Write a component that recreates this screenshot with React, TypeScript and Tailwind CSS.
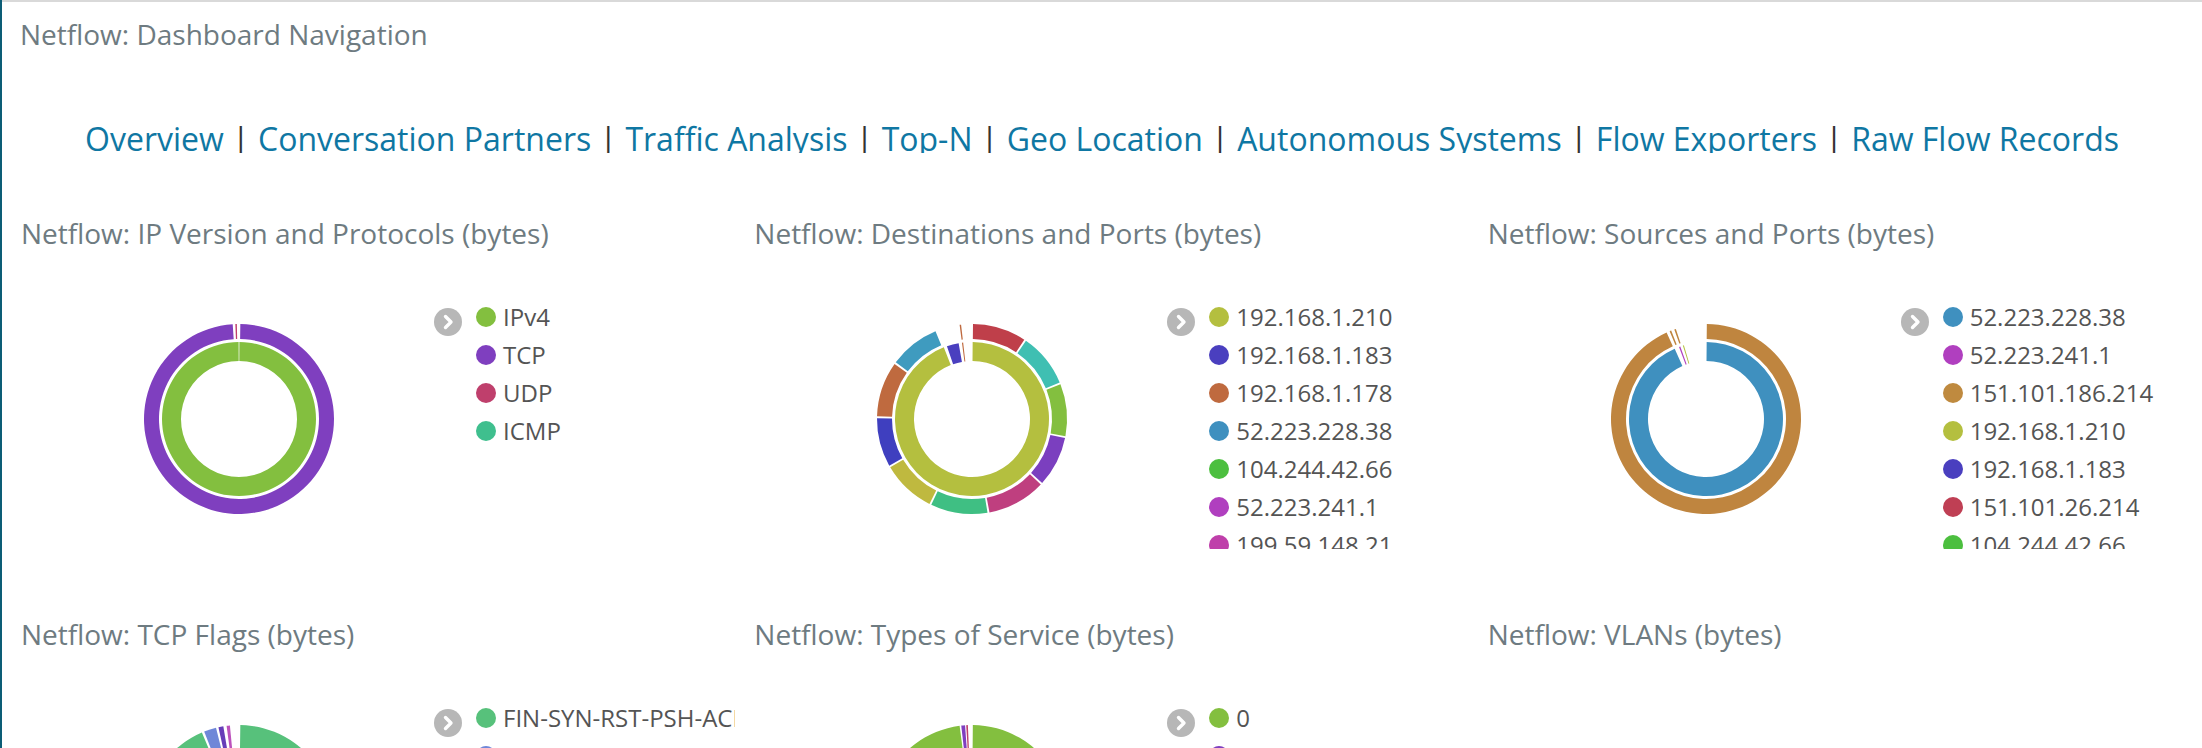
import React from 'react';

type Slice = [number, number, string];
type Ring = { r0: number; r1: number; slices: Slice[] };
type LegendItem = { label: string; dot: string };
type Panel = { title: string; rings?: Ring[]; legend?: LegendItem[] };

// slices that touch each other, with a small white seam between them
function seq(bounds: number[], colors: string[], gap = 0.6): Slice[] {
  return colors.map((c, i) => [bounds[i] + gap, bounds[i + 1] - gap, c] as Slice);
}

function arcPath(cx: number, cy: number, r0: number, r1: number, a0: number, a1: number) {
  const rad = (a: number) => ((a - 90) * Math.PI) / 180;
  const pt = (r: number, a: number) => [cx + r * Math.cos(rad(a)), cy + r * Math.sin(rad(a))];
  const large = a1 - a0 > 180 ? 1 : 0;
  const [x0, y0] = pt(r1, a0);
  const [x1, y1] = pt(r1, a1);
  if (r0 === 0) {
    return `M${cx} ${cy} L${x0} ${y0} A${r1} ${r1} 0 ${large} 1 ${x1} ${y1} Z`;
  }
  const [x2, y2] = pt(r0, a1);
  const [x3, y3] = pt(r0, a0);
  return `M${x0} ${y0} A${r1} ${r1} 0 ${large} 1 ${x1} ${y1} L${x2} ${y2} A${r0} ${r0} 0 ${large} 0 ${x3} ${y3} Z`;
}

const links = [
  'Overview',
  'Conversation Partners',
  'Traffic Analysis',
  'Top-N',
  'Geo Location',
  'Autonomous Systems',
  'Flow Exporters',
  'Raw Flow Records',
];

const panels: Panel[] = [
  {
    title: 'Netflow: IP Version and Protocols (bytes)',
    rings: [
      { r0: 58, r1: 77, slices: [[0.3, 359.7, '#83bf3f']] },
      { r0: 80, r1: 95, slices: [[0.8, 356.2, '#7f3fbf'], [357.8, 358.7, '#bf3f6c']] },
    ],
    legend: [
      { label: 'IPv4', dot: 'bg-[#83bf3f]' },
      { label: 'TCP', dot: 'bg-[#7f3fbf]' },
      { label: 'UDP', dot: 'bg-[#bf3f6c]' },
      { label: 'ICMP', dot: 'bg-[#3fbf8e]' },
    ],
  },
  {
    title: 'Netflow: Destinations and Ports (bytes)',
    rings: [
      {
        r0: 58,
        r1: 77,
        slices: [
          [0.5, 338.5, '#b4bf3f'],
          [341, 350, '#4a3fbf'],
          [352.5, 353.4, '#bf6a3f'],
        ],
      },
      {
        r0: 80,
        r1: 95,
        slices: [
          ...seq(
            [0, 34, 68, 101, 133, 170, 206, 240, 271, 306, 338],
            ['#bf3f4a', '#3fbfb2', '#83bf3f', '#7b3fbf', '#bf3f7f', '#3fbf83', '#bfb93f', '#3f3fbf', '#bf6a3f', '#3f9bbf'],
          ),
          [352.5, 353.4, '#bf6a3f'],
        ],
      },
    ],
    legend: [
      { label: '192.168.1.210', dot: 'bg-[#b4bf3f]' },
      { label: '192.168.1.183', dot: 'bg-[#4a3fbf]' },
      { label: '192.168.1.178', dot: 'bg-[#bf6a3f]' },
      { label: '52.223.228.38', dot: 'bg-[#3f90bf]' },
      { label: '104.244.42.66', dot: 'bg-[#4cbf3f]' },
      { label: '52.223.241.1', dot: 'bg-[#b03fbf]' },
      { label: '199.59.148.21', dot: 'bg-[#bf3faa]' },
    ],
  },
  {
    title: 'Netflow: Sources and Ports (bytes)',
    rings: [
      {
        r0: 58,
        r1: 77,
        slices: [
          [0.5, 336, '#3f90bf'],
          [339.5, 340.5, '#b03fbf'],
          [342.5, 343.3, '#b4bf3f'],
        ],
      },
      {
        r0: 80,
        r1: 95,
        slices: [
          [0.5, 335.5, '#bf853f'],
          [337.5, 338.5, '#bf853f'],
          [340.5, 341.5, '#bf853f'],
        ],
      },
    ],
    legend: [
      { label: '52.223.228.38', dot: 'bg-[#3f90bf]' },
      { label: '52.223.241.1', dot: 'bg-[#b03fbf]' },
      { label: '151.101.186.214', dot: 'bg-[#bf8a3f]' },
      { label: '192.168.1.210', dot: 'bg-[#b4bf3f]' },
      { label: '192.168.1.183', dot: 'bg-[#4a3fbf]' },
      { label: '151.101.26.214', dot: 'bg-[#bf3f54]' },
      { label: '104.244.42.66', dot: 'bg-[#4cbf3f]' },
    ],
  },
  {
    title: 'Netflow: TCP Flags (bytes)',
    rings: [
      {
        r0: 0,
        r1: 95,
        slices: [
          [0.8, 337, '#57c17b'],
          [338.5, 346, '#6f87d8'],
          [347.5, 350.5, '#663db8'],
          [352.5, 354.5, '#bc52bc'],
        ],
      },
    ],
    legend: [
      { label: 'FIN-SYN-RST-PSH-ACK', dot: 'bg-[#57c17b]' },
      { label: 'FIN-SYN-PSH-ACK', dot: 'bg-[#6f87d8]' },
    ],
  },
  {
    title: 'Netflow: Types of Service (bytes)',
    rings: [
      {
        r0: 0,
        r1: 95,
        slices: [
          [0.5, 352.5, '#83bf3f'],
          [353.5, 355.8, '#7f3fbf'],
          [356.5, 357.5, '#bf3f6c'],
        ],
      },
    ],
    legend: [
      { label: '0', dot: 'bg-[#83bf3f]' },
      { label: '32', dot: 'bg-[#7f3fbf]' },
    ],
  },
  { title: 'Netflow: VLANs (bytes)' },
];

function Chevron() {
  return (
    <svg width={28} height={28} viewBox="0 0 28 28">
      <circle cx={14} cy={14} r={14} fill="#b7b7b7" />
      <polyline
        points="11.5,8.5 17,14 11.5,19.5"
        fill="none"
        stroke="#fff"
        strokeWidth={3.4}
        strokeLinecap="round"
        strokeLinejoin="round"
      />
    </svg>
  );
}

function Donut({ rings }: { rings: Ring[] }) {
  return (
    <svg width={432} height={347} className="shrink-0">
      {rings.map((ring, i) =>
        ring.slices.map(([a0, a1, fill], j) => (
          <path key={`${i}-${j}`} d={arcPath(237, 166, ring.r0, ring.r1, a0, a1)} fill={fill} />
        )),
      )}
    </svg>
  );
}

function Legend({ items }: { items: LegendItem[] }) {
  return (
    <div className="mt-[45px] flex h-[251px] w-[302px] shrink-0 overflow-hidden">
      <div className="w-[42px] shrink-0 pt-[10px]">
        <Chevron />
      </div>
      <ul className="min-w-0 flex-1">
        {items.map((it) => (
          <li
            key={it.label}
            className="flex h-[38px] items-center gap-[7px] whitespace-nowrap text-[24px] text-[#545454]"
          >
            <span className={`h-[20px] w-[20px] shrink-0 rounded-full ${it.dot}`} />
            <span>{it.label}</span>
          </li>
        ))}
      </ul>
    </div>
  );
}

function PanelView({ panel }: { panel: Panel }) {
  return (
    <section className="h-[401px] min-w-0 overflow-hidden">
      <h2 className="mt-[14px] whitespace-nowrap pl-[19px] text-[28px] leading-[40px] text-[#6e7b81]">
        {panel.title}
      </h2>
      <div className="flex">
        {panel.rings && <Donut rings={panel.rings} />}
        {panel.legend && <Legend items={panel.legend} />}
      </div>
    </section>
  );
}

export default function App() {
  return (
    <div className="flex h-[748px] w-full overflow-hidden bg-white font-['Open_Sans',sans-serif]">
      <div className="w-[2px] shrink-0 bg-[#0c5d76]" />
      <div className="flex min-w-0 flex-1 flex-col border-t-2 border-[#d9d9d9]">
        <div className="pl-[18px] pt-[12px] text-[28px] leading-[40px] text-[#6e7b81]">
          Netflow: Dashboard Navigation
        </div>
        {/* the markdown panel is shorter than its line, so descenders get cut as in the original */}
        <nav className="mt-[65px] h-[34px] shrink-0 overflow-hidden whitespace-nowrap text-center text-[32px] leading-[40px]">
          {links.map((l, i) => (
            <React.Fragment key={l}>
              {i > 0 && <span className="text-[#333]">{' | '}</span>}
              <a className="text-[#0f77a3]">{l}</a>
            </React.Fragment>
          ))}
        </nav>
        <div className="mt-[46px] grid shrink-0 grid-cols-3">
          {panels.map((p) => (
            <PanelView key={p.title} panel={p} />
          ))}
        </div>
      </div>
    </div>
  );
}
